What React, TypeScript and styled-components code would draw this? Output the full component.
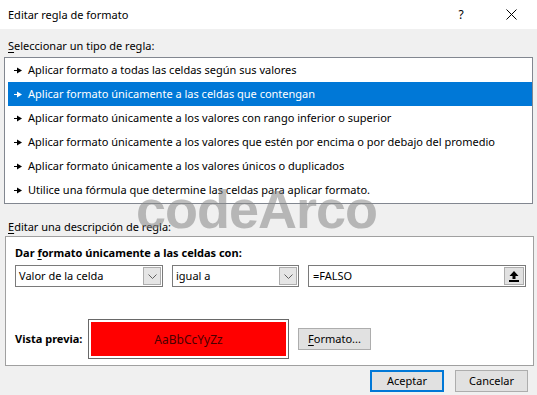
import React from "react";
import styled, { createGlobalStyle } from "styled-components";

const Global = createGlobalStyle`
  html, body { margin: 0; padding: 0; background: #f0f0f0; }
  body { font-family: "Noto Sans", "Open Sans", Arial, sans-serif; font-size: 11px; color: #000; }
`;

const Dialog = styled.div`
  position: relative;
  width: 537px;
  height: 395px;
  overflow: hidden;
  background: #f0f0f0;
  display: flex;
  flex-direction: column;
`;

const TitleBar = styled.div`
  height: 29px;
  background: #fff;
  display: flex;
  align-items: center;
  padding-left: 8px;
  flex-shrink: 0;
`;

const Title = styled.div`
  flex: 1;
  font-size: 11px;
  line-height: 16px;
`;

const TitleBtn = styled.div<{ $w: number }>`
  width: ${(p) => p.$w}px;
  height: 29px;
  display: flex;
  align-items: center;
  justify-content: center;
  font-size: 12px;
`;

const Body = styled.div`
  flex: 1;
  display: flex;
  flex-direction: column;
  padding: 0 4px 0 4px;
`;

const SectionLabel = styled.div<{ $mt: number }>`
  margin-top: ${(p) => p.$mt}px;
  padding-left: 4px;
  line-height: 16px;
  height: 16px;
`;

const U = styled.span`
  text-decoration: underline;
  text-underline-offset: 2px;
`;

const ListBox = styled.div`
  margin-top: 3px;
  width: 529px;
  height: 147px;
  box-sizing: border-box;
  border: 1px solid #828790;
  background: #fff;
  padding: 0 0 1px 3px;
  display: flex;
  flex-direction: column;
`;

const Row = styled.div<{ $sel?: boolean }>`
  height: 24px;
  display: flex;
  align-items: center;
  gap: 6px;
  padding-left: 6px;
  background: ${(p) => (p.$sel ? "#0078d7" : "transparent")};
  color: ${(p) => (p.$sel ? "#fff" : "#000")};
  white-space: nowrap;
  line-height: 16px;
  font-size: 11px;
  svg { flex-shrink: 0; }
`;

const Panel = styled.div`
  margin-top: 1px;
  margin-left: 1px;
  width: 529px;
  height: 130px;
  box-sizing: border-box;
  border: 1px solid #a0a0a0;
  background: #fff;
  padding: 8px 0 0 9px;
  display: flex;
  flex-direction: column;
`;

const Bold = styled.div`
  font-weight: 700;
  line-height: 16px;
  height: 16px;
  white-space: nowrap;
`;

const InputRow = styled.div`
  margin-top: 4px;
  display: flex;
  gap: 9px;
  height: 22px;
`;

const Combo = styled.div<{ $w: number }>`
  width: ${(p) => p.$w}px;
  height: 22px;
  box-sizing: border-box;
  border: 1px solid #7a7a7a;
  background: #fff;
  display: flex;
  align-items: center;
  padding: 1px 1px 1px 3px;
`;

const ComboText = styled.div`
  flex: 1;
  line-height: 16px;
  white-space: nowrap;
`;

const DropBtn = styled.div`
  width: 18px;
  height: 18px;
  box-sizing: border-box;
  border: 1px solid #adadad;
  background: #e5e5e5;
  display: flex;
  align-items: center;
  justify-content: center;
`;

const Field = styled.div`
  width: 218px;
  height: 22px;
  box-sizing: border-box;
  border: 1px solid #7a7a7a;
  background: #fff;
  display: flex;
  align-items: center;
  padding: 1px 1px 1px 4px;
`;

const RefBtn = styled.div`
  width: 20px;
  height: 18px;
  box-sizing: border-box;
  border: 1px solid #adadad;
  background: #e1e1e1;
  display: flex;
  align-items: center;
  justify-content: center;
`;

const PreviewRow = styled.div`
  margin-top: 32px;
  display: flex;
  align-items: center;
`;

const PreviewLabel = styled(Bold)`
  width: 73px;
`;

const PreviewBox = styled.div`
  width: 201px;
  height: 40px;
  box-sizing: border-box;
  border: 1px solid #696969;
  background: #fff;
  padding: 2px;
  display: flex;
`;

const PreviewFill = styled.div`
  flex: 1;
  background: #ff0000;
  color: #4a0000;
  display: flex;
  align-items: center;
  justify-content: center;
  font-size: 12px;
`;

const Button = styled.div<{ $w: number; $default?: boolean }>`
  width: ${(p) => p.$w}px;
  height: 22px;
  box-sizing: border-box;
  border: ${(p) => (p.$default ? "2px solid #0078d7" : "1px solid #adadad")};
  background: #e1e1e1;
  display: flex;
  align-items: center;
  justify-content: center;
  line-height: 16px;
`;

const FormatBtn = styled(Button)`
  margin-left: 9px;
`;

const Footer = styled.div`
  margin-top: 4px;
  display: flex;
  justify-content: flex-end;
  gap: 11px;
  padding-right: 5px;
`;

const Watermark = styled.div`
  position: absolute;
  left: 136px;
  top: 178px;
  font-family: "Liberation Sans", Arial, sans-serif;
  font-weight: 700;
  font-size: 54px;
  letter-spacing: -1px;
  color: rgba(135, 135, 135, 0.55);
  pointer-events: none;
  filter: blur(0.7px);
  white-space: nowrap;
`;

const Arrow = ({ color }: { color: string }) => (
  <svg width="8" height="7" viewBox="0 0 8 7">
    <rect x="0" y="3" width="4" height="1" fill={color} />
    <polygon points="3,0.5 8,3.5 3,6.5" fill={color} />
  </svg>
);

const Chevron = () => (
  <svg width="9" height="5" viewBox="0 0 9 5">
    <polyline points="0.5,0.5 4.5,4.5 8.5,0.5" fill="none" stroke="#606060" strokeWidth="1" />
  </svg>
);

const UpIcon = () => (
  <svg width="10" height="11" viewBox="0 0 10 11">
    <polygon points="5,0 9.5,5 6.5,5 6.5,8 3.5,8 3.5,5 0.5,5" fill="#000" />
    <rect x="0" y="9" width="10" height="2" fill="#000" />
  </svg>
);

const CloseIcon = () => (
  <svg width="11" height="11" viewBox="0 0 11 11">
    <path d="M0.5 0.5 L10.5 10.5 M10.5 0.5 L0.5 10.5" stroke="#000" strokeWidth="1" />
  </svg>
);

const rules = [
  "Aplicar formato a todas las celdas según sus valores",
  "Aplicar formato únicamente a las celdas que contengan",
  "Aplicar formato únicamente a los valores con rango inferior o superior",
  "Aplicar formato únicamente a los valores que estén por encima o por debajo del promedio",
  "Aplicar formato únicamente a los valores únicos o duplicados",
  "Utilice una fórmula que determine las celdas para aplicar formato.",
];

export default function App() {
  return (
    <Dialog>
      <Global />
      <TitleBar>
        <Title>Editar regla de formato</Title>
        <TitleBtn $w={48}>?</TitleBtn>
        <TitleBtn $w={52}>
          <CloseIcon />
        </TitleBtn>
      </TitleBar>
      <Body>
        <SectionLabel $mt={9}>
          <U>S</U>eleccionar un tipo de regla:
        </SectionLabel>
        <ListBox>
          {rules.map((r, i) => (
            <Row key={i} $sel={i === 1}>
              <Arrow color={i === 1 ? "#fff" : "#000"} />
              <span>{r}</span>
            </Row>
          ))}
        </ListBox>
        <SectionLabel $mt={15}>
          <U>E</U>ditar una descripción de regla:
        </SectionLabel>
        <Panel>
          <Bold>
            Dar <U>f</U>ormato únicamente a las celdas con:
          </Bold>
          <InputRow>
            <Combo $w={148}>
              <ComboText>Valor de la celda</ComboText>
              <DropBtn>
                <Chevron />
              </DropBtn>
            </Combo>
            <Combo $w={127}>
              <ComboText>igual a</ComboText>
              <DropBtn>
                <Chevron />
              </DropBtn>
            </Combo>
            <Field>
              <ComboText>=FALSO</ComboText>
              <RefBtn>
                <UpIcon />
              </RefBtn>
            </Field>
          </InputRow>
          <PreviewRow>
            <PreviewLabel>Vista previa:</PreviewLabel>
            <PreviewBox>
              <PreviewFill>AaBbCcYyZz</PreviewFill>
            </PreviewBox>
            <FormatBtn $w={73}>
              <span>
                <U>F</U>ormato...
              </span>
            </FormatBtn>
          </PreviewRow>
        </Panel>
        <Footer>
          <Button $w={74} $default>
            Aceptar
          </Button>
          <Button $w={73}>Cancelar</Button>
        </Footer>
      </Body>
      <Watermark>codeArco</Watermark>
    </Dialog>
  );
}
